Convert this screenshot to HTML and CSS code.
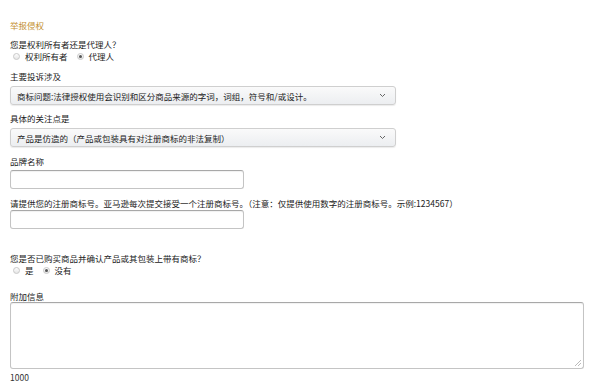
FILE: index.html
```html
<!DOCTYPE html>
<html lang="zh-CN">
<head>
    <meta charset="UTF-8">
    <meta name="viewport" content="width=device-width, initial-scale=1.0">
    <title>举报侵权</title>
    <link rel="stylesheet" href="styles.css">
</head>
<body>
    <form class="report-form">
        <h1 class="form-title">举报侵权</h1>

        <div class="field field-q1">
            <div class="label">您是权利所有者还是代理人？</div>
            <div class="radio-row">
                <label class="radio"><span class="dot"></span>权利所有者</label>
                <label class="radio checked"><span class="dot"></span>代理人</label>
            </div>
        </div>

        <div class="field field-select">
            <div class="label">主要投诉涉及</div>
            <div class="select">
                <span class="select-text">商标问题:法律授权使用会识别和区分商品来源的字词，词组，符号和/或设计。</span>
                <svg class="chevron" width="7" height="5" viewBox="0 0 7 5"><path d="M1 1l2.5 2.5L6 1" fill="none" stroke="#666" stroke-width="1"/></svg>
            </div>
        </div>

        <div class="field field-select">
            <div class="label">具体的关注点是</div>
            <div class="select">
                <span class="select-text">产品是仿造的（产品或包装具有对注册商标的非法复制）</span>
                <svg class="chevron" width="7" height="5" viewBox="0 0 7 5"><path d="M1 1l2.5 2.5L6 1" fill="none" stroke="#666" stroke-width="1"/></svg>
            </div>
        </div>

        <div class="field field-input">
            <div class="label">品牌名称</div>
            <div class="input"></div>
        </div>

        <div class="field field-input field-tm">
            <div class="label">请提供您的注册商标号。亚马逊每次提交接受一个注册商标号。（注意：仅提供使用数字的注册商标号。示例:1234567）</div>
            <div class="input"></div>
        </div>

        <div class="field field-q2">
            <div class="label">您是否已购买商品并确认产品或其包装上带有商标？</div>
            <div class="radio-row">
                <label class="radio"><span class="dot"></span>是</label>
                <label class="radio checked"><span class="dot"></span>没有</label>
            </div>
        </div>

        <div class="field field-area">
            <div class="label">附加信息</div>
            <div class="textarea">
                <svg class="grip" width="6" height="6" viewBox="0 0 6 6"><path d="M6 0L0 6M6 3L3 6" stroke="#aaa" stroke-width="0.8"/></svg>
            </div>
            <div class="counter">1000</div>
        </div>
    </form>
</body>
</html>
```

FILE: styles.css
```css
body {
    margin: 0;
    padding: 0;
    background: #fff;
    color: #222;
    font-family: "Noto Sans CJK SC", "Liberation Sans", sans-serif;
    font-size: 8.5px;
    line-height: 12px;
}
.report-form {
    padding: 19px 15px 0 10px;
}
.form-title {
    margin: 0;
    font-size: 8.5px;
    font-weight: normal;
    line-height: 12px;
    color: #c39030;
}
.field {
    margin-top: 8px;
}
.field-q1 {
    margin-top: 7px;
}
.label {
    line-height: 12px;
}
.radio-row {
    display: flex;
    gap: 9px;
    padding-left: 3px;
}
.radio {
    display: flex;
    align-items: center;
    gap: 5px;
}
.dot {
    width: 7px;
    height: 7px;
    border-radius: 50%;
    border: 1px solid #c8c8c8;
    background: linear-gradient(#fdfdfd, #e6e6e6);
    box-sizing: border-box;
    display: flex;
    align-items: center;
    justify-content: center;
}
.radio.checked .dot::after {
    content: "";
    width: 3px;
    height: 3px;
    border-radius: 50%;
    background: #555;
}
.field-select .select {
    margin-top: 4px;
}
.field-select + .field-select {
    margin-top: 7px;
}
.select {
    width: 386px;
    height: 19px;
    box-sizing: border-box;
    border: 1px solid #cfcfcf;
    border-radius: 3px;
    background: linear-gradient(#fafafa, #eceef1);
    box-shadow: 0 1px 1px rgba(0, 0, 0, 0.08);
    display: flex;
    align-items: center;
    justify-content: space-between;
    padding: 0 9px 0 6px;
}
.select-text {
    white-space: nowrap;
}
.input {
    width: 234px;
    height: 19px;
    box-sizing: border-box;
    margin-top: 3px;
    border: 1px solid #c4c4c4;
    border-top-color: #a8a8a8;
    border-radius: 3px;
    box-shadow: inset 0 1px 1px rgba(0, 0, 0, 0.06);
}
.field-tm .input {
    margin-top: 1px;
}
.field-q2 {
    margin-top: 23px;
}
.field-area {
    margin-top: 14px;
}
.textarea {
    width: 574px;
    height: 67px;
    box-sizing: border-box;
    border: 1px solid #c4c4c4;
    border-top-color: #a8a8a8;
    border-radius: 3px;
    box-shadow: inset 0 1px 1px rgba(0, 0, 0, 0.06);
    display: flex;
    align-items: flex-end;
    justify-content: flex-end;
    padding: 0 2px 2px 0;
}
.counter {
    margin-top: 2px;
    color: #333;
}
```
